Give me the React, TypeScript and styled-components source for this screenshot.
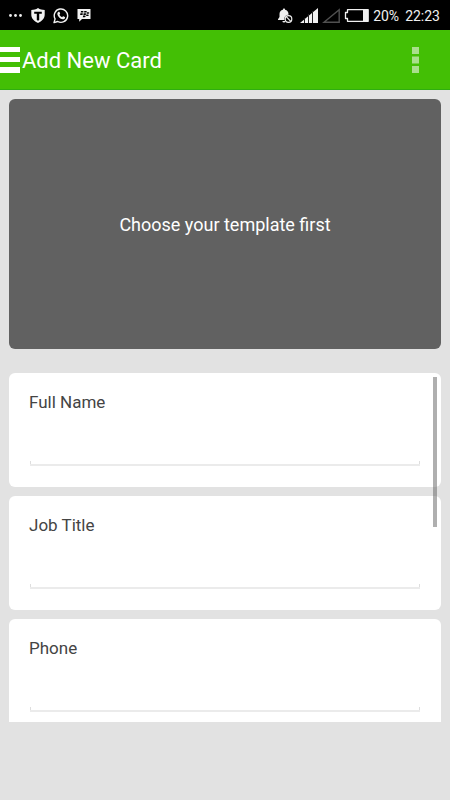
import React, { useId } from "react";
import styled, { createGlobalStyle } from "styled-components";

const GlobalStyle = createGlobalStyle`
  *, *::before, *::after { box-sizing: border-box; }
  body {
    margin: 0;
    background: #e2e2e2;
    font-family: Roboto, "Liberation Sans", sans-serif;
  }
  svg { display: block; flex: none; }
`;

const Screen = styled.div`
  display: flex;
  flex-direction: column;
  height: 100vh;
  background: #e2e2e2;
`;

const StatusBar = styled.div`
  display: flex;
  flex: none;
  align-items: center;
  justify-content: space-between;
  height: 30px;
  padding: 1px 10px 0 8px;
  background: #000;
  color: #f0f0f0;
`;

const StatusGroup = styled.div<{ $gap: number }>`
  display: flex;
  align-items: center;
  gap: ${(p) => p.$gap}px;
`;

const StatusText = styled.span`
  font-size: 14px;
  line-height: 20px;
  white-space: nowrap;
`;

const AppBar = styled.header`
  display: flex;
  flex: none;
  align-items: center;
  height: 60px;
  padding: 1px 24px 0 0;
  background: #43bf05;
  border-bottom: 1px solid #2fae10;
`;

const IconButton = styled.button`
  display: flex;
  align-items: center;
  justify-content: center;
  padding: 0;
  border: 0;
  background: none;
  cursor: pointer;
`;

const MenuButton = styled(IconButton)`
  width: 22px;
  height: 48px;
  justify-content: flex-start;
`;

const MoreButton = styled(IconButton)`
  width: 22px;
  height: 48px;
`;

const Title = styled.h1`
  flex: 1;
  margin: 0;
  padding-top: 2px;
  color: #fff;
  font-size: 22px;
  font-weight: 400;
  line-height: 32px;
`;

const Content = styled.main`
  display: flex;
  flex: 1;
  flex-direction: column;
  gap: 24px;
  min-height: 0;
  padding: 9px 9px 78px;
`;

const TemplateButton = styled.button`
  flex: none;
  height: 250px;
  padding: 2px 0 0;
  border: 0;
  border-radius: 6px;
  background: #616161;
  color: #fff;
  font-family: inherit;
  font-size: 18px;
  line-height: 24px;
  cursor: pointer;
`;

const ListFrame = styled.div`
  position: relative;
  display: flex;
  flex: 1;
  min-height: 0;
`;

const FieldList = styled.form`
  display: flex;
  flex: 1;
  flex-direction: column;
  gap: 9px;
  overflow-y: auto;
  scrollbar-width: none;
`;

const ScrollThumb = styled.div`
  position: absolute;
  top: 4px;
  right: 4px;
  width: 4px;
  height: 150px;
  background: rgba(96, 96, 96, 0.5);
  pointer-events: none;
`;

const FieldCard = styled.div`
  display: flex;
  flex: none;
  flex-direction: column;
  justify-content: space-between;
  height: 114px;
  padding: 17px 20px 21px;
  border-radius: 6px;
  background: #fff;
`;

const FieldLabel = styled.label`
  color: #444;
  font-size: 17px;
  line-height: 24px;
`;

const FieldInput = styled.input`
  height: 32px;
  margin: 0 1px;
  padding: 0 6px 4px;
  border: 0;
  outline: 0;
  background:
    linear-gradient(#ebebeb, #ebebeb) left bottom / 100% 2px no-repeat,
    linear-gradient(#dedede, #dedede) left bottom / 1px 5px no-repeat,
    linear-gradient(#dedede, #dedede) right bottom / 1px 5px no-repeat;
  color: #333;
  font-family: inherit;
  font-size: 17px;
`;

function Field({ label, name, type }: { label: string; name: string; type: string }) {
  const id = useId();
  return (
    <FieldCard>
      <FieldLabel htmlFor={id}>{label}</FieldLabel>
      <FieldInput id={id} name={name} type={type} />
    </FieldCard>
  );
}

const DotsIcon = () => (
  <svg width="15" height="4" viewBox="0 0 15 4" fill="#eee">
    <circle cx="2.5" cy="1.500" r="1.400" />
    <circle cx="7.5" cy="1.500" r="1.400" />
    <circle cx="12.5" cy="1.500" r="1.400" />
  </svg>
);

const ShieldIcon = () => (
  <svg width="14" height="16" viewBox="0 0 14 16">
    <path d="M7 0C9 1.500 11.300 1.800 13.700 1.900V6.500c0 4-2.700 6.600-6.700 8.500C3 13.100.3 10.500.3 6.500V1.900C2.700 1.800 5 1.500 7 0Z" fill="#f2f2f2" />
    <path d="M3.200 3.800h7.600v2H8.200v6.200L7 12.700l-1.200-.7V5.800H3.200Z" fill="#000" />
  </svg>
);

const WhatsAppIcon = () => (
  <svg width="16" height="16" viewBox="0 0 16 16">
    <path d="M1 14.600l1.100-3.700A6.700 6.700 0 1 1 4.700 13.500Z" fill="none" stroke="#f2f2f2" strokeWidth="1.400" strokeLinejoin="round" />
    <path d="M5.600 3.800c.3-.1.700-.1.900.3l.6 1.300c.1.300 0 .6-.7 1.300.6 1.200 1.500 2 2.700 2.500.8-.9 1-1.100 1.300-.9l1.400.7c.3.200.3.400.2.900-.3 1-1.400 1.500-2.400 1.300C7 10.700 4.900 8.600 4.400 6.400c-.2-1 .3-2.200 1.200-2.600Z" fill="#f2f2f2" />
  </svg>
);

const MessengerIcon = () => (
  <svg width="14" height="13" viewBox="0 0 14 13">
    <path d="M.5 0h13v10H5l-2.800 2.800V10H.5Z" fill="#f2f2f2" />
    <g fill="#000">
      <path d="M4 2h1.700q1 .1.800.9-.2.700-1 .7H3.700Z" />
      <path d="M7.300 2H9q1 .1.800.9-.2.700-1 .7H7Z" />
      <path d="M3.400 4.300h1.700q1 .1.800.9-.2.700-1 .7H3.100Z" />
      <path d="M6.700 4.300h1.700q1 .1.800.9-.2.700-1 .7H6.400Z" />
      <path d="M10 3.300h1.500q1 .1.800.8-.2.700-1 .7H9.700Z" />
      <path d="M9.400 5.600h1.500q1 .1.800.8-.2.700-1 .7H9.100Z" />
      <path d="M6.100 6.600h1.700q1 .1.800.9-.2.700-1 .7H5.800Z" />
    </g>
  </svg>
);

const MutedBellIcon = () => (
  <svg width="15" height="16" viewBox="0 0 15 16">
    <path d="M6 .5c.7 0 1.100.5 1.100 1.200C9.200 2.200 10.500 4 10.500 6v3l1.500 2.200V12H0v-.8L1.500 9V6c0-2 1.300-3.800 3.400-4.300C4.900 1 5.300.5 6 .5ZM4.400 13h3.200A1.600 1.600 0 0 1 4.400 13Z" fill="#eee" />
    <circle cx="10.500" cy="11" r="4.200" fill="#000" />
    <circle cx="10.500" cy="11" r="3.300" fill="none" stroke="#eee" strokeWidth="1.200" />
    <path d="m8.200 8.700 4.600 4.600" stroke="#eee" strokeWidth="1.200" />
  </svg>
);

const SignalIcon = () => (
  <svg width="18" height="15" viewBox="0 0 18 15">
    <path d="M0 15 18 0v15Z" fill="#f2f2f2" />
    <path d="M4.500 10v5M8.500 6v9M12.500 3v12" stroke="#222" strokeWidth="1" />
  </svg>
);

const NoSignalIcon = () => (
  <svg width="18" height="15" viewBox="0 0 18 15">
    <path d="M2 14.200 17.200 1.700v12.500Z" fill="none" stroke="#505050" strokeWidth="1.400" />
  </svg>
);

const BatteryIcon = () => (
  <svg width="25" height="13" viewBox="0 0 25 13">
    <path d="M3.500.7h20.700v11.600H3.500V9.500H1.500v-6h2Z" fill="none" stroke="#f0f0f0" strokeWidth="1.300" strokeLinejoin="round" />
    <path d="M19 1h5v11h-5Z" fill="#f0f0f0" />
  </svg>
);

const MenuIcon = () => (
  <svg width="20" height="26" viewBox="0 0 20 26" fill="#fff">
    <path d="M0 0h20v5H0ZM0 10h20v5H0ZM0 20h20v6H0Z" />
  </svg>
);

const MoreIcon = () => (
  <svg width="7" height="26" viewBox="0 0 7 26" fill="#a9df8d">
    <path d="M0 0h7v7H0ZM0 9.500h7v7H0ZM0 19h7v7H0Z" />
  </svg>
);

const fields = [
  { label: "Full Name", name: "fullName", type: "text" },
  { label: "Job Title", name: "jobTitle", type: "text" },
  { label: "Phone", name: "phone", type: "tel" },
];

export default function App() {
  return (
    <Screen>
      <GlobalStyle />
      <StatusBar>
        <StatusGroup $gap={8}>
          <DotsIcon />
          <ShieldIcon />
          <WhatsAppIcon />
          <MessengerIcon />
        </StatusGroup>
        <StatusGroup $gap={6}>
          <StatusGroup $gap={4}>
            <StatusGroup $gap={7}>
              <MutedBellIcon />
              <SignalIcon />
            </StatusGroup>
            <NoSignalIcon />
            <BatteryIcon />
            <StatusText>20%</StatusText>
          </StatusGroup>
          <StatusText>22:23</StatusText>
        </StatusGroup>
      </StatusBar>
      <AppBar>
        <MenuButton type="button" aria-label="Menu">
          <MenuIcon />
        </MenuButton>
        <Title>Add New Card</Title>
        <MoreButton type="button" aria-label="More options">
          <MoreIcon />
        </MoreButton>
      </AppBar>
      <Content>
        <TemplateButton type="button">Choose your template first</TemplateButton>
        <ListFrame>
          <FieldList>
            {fields.map((field) => (
              <Field key={field.name} {...field} />
            ))}
          </FieldList>
          <ScrollThumb />
        </ListFrame>
      </Content>
    </Screen>
  );
}
